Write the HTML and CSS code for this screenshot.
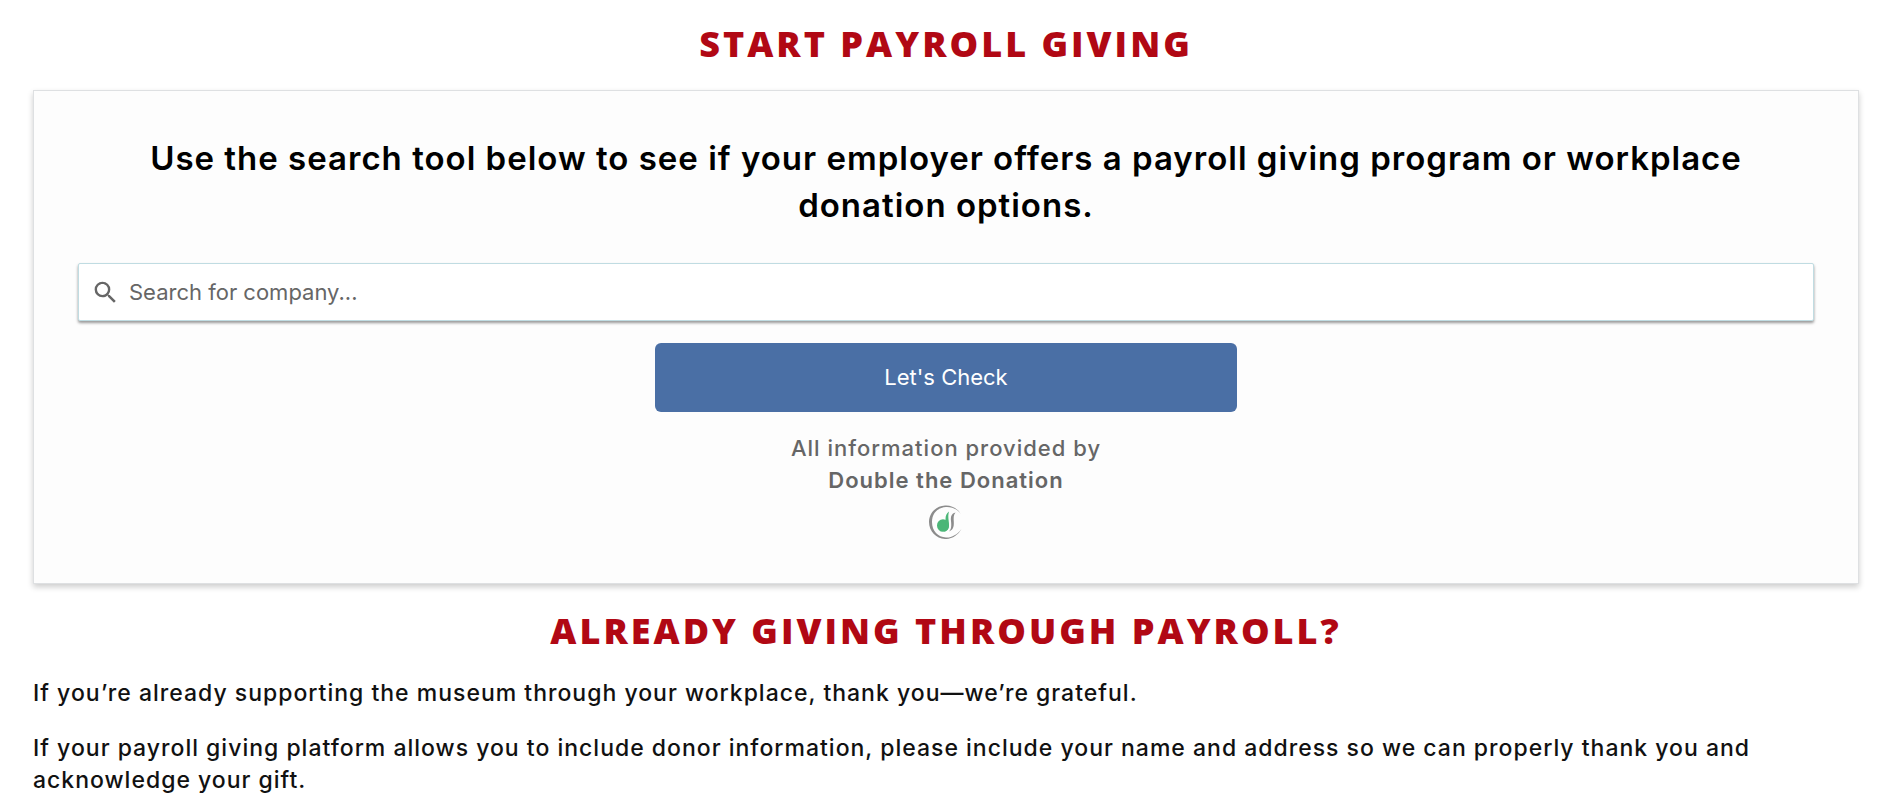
FILE: index.html
```html
<!DOCTYPE html>
<html lang="en">
<head>
<meta charset="utf-8">
<meta name="viewport" content="width=device-width, initial-scale=1">
<title>Start Payroll Giving</title>
<link rel="stylesheet" href="styles.css">
</head>
<body>
<main class="page">
  <h2 class="title">START PAYROLL GIVING</h2>
  <section class="card">
    <h3 class="card-heading">Use the search tool below to see if your employer offers a payroll giving program or workplace donation options.</h3>
    <form class="search-form">
      <div class="search">
        <label class="search-label" for="company">
          <svg class="search-icon" viewBox="0 0 24 24" role="img" aria-label="Company"><path fill="currentColor" d="M15.5 14h-.79l-.28-.27A6.471 6.471 0 0 0 16 9.500 6.500 6.500 0 1 0 9.500 16c1.610 0 3.090-.59 4.230-1.570l.27.28v.79l5 4.990L20.490 19l-4.990-5zm-6 0C7.010 14 5 11.990 5 9.500S7.010 5 9.500 5 14 7.010 14 9.500 11.990 14 9.500 14z"/></svg>
        </label>
        <input class="search-input" id="company" type="text" placeholder="Search for company...">
      </div>
      <button class="check-button" type="button">Let's Check</button>
    </form>
    <div class="credit">
      <span>All information provided by</span>
      <a class="credit-link" href="#">Double the Donation</a>
      <svg class="credit-logo" viewBox="0 0 34 34" role="img" aria-label="Double the Donation logo">
        <path fill="#8c8c8c" d="M32 9C28 3 22 0 16 .5 7 1 0 8 0 17s7 16.500 16 17c7 .3 13-4 16.500-10C28 30 22 33 17 32.500 9 32 3 26 3 17S9 2.500 17 2c6-.3 11 2 15 7z"/>
        <ellipse cx="14" cy="20.500" rx="6" ry="6.300" fill="#4bb677"/>
        <path fill="#4bb677" d="M20 6.500c-2.500 2-3.500 4-3.500 8V22c0 2-.5 3.500-1.500 4.500 3.500-.5 5-3 5-6.500 0-5-1.500-8 0-13.500z"/>
        <path fill="#8c8c8c" d="M26.500 7.500c-4 1-5 4-4.500 8.500.5 5 .5 8-2 10.500 4-1.500 5-4.500 4.800-9.500-.2-4-.5-7 1.700-9.500z"/>
      </svg>
    </div>
  </section>
  <h2 class="title">ALREADY GIVING THROUGH PAYROLL?</h2>
  <p class="text">If you’re already supporting the museum through your workplace, thank you—we’re grateful.</p>
  <p class="text">If your payroll giving platform allows you to include donor information, please include your name and address so we can properly thank you and acknowledge your gift.</p>
</main>
</body>
</html>
```
FILE: styles.css
```css
* { box-sizing: border-box; }

body {
  margin: 0;
  background: #fff;
  color: #111;
  font-family: Inter, "Liberation Sans", sans-serif;
}

.page { padding: 20px 33px 0; }

.title {
  margin: 0;
  color: #b10814;
  font-family: "Open Sans", "Noto Sans", sans-serif;
  font-size: 36px;
  font-weight: 800;
  line-height: 48px;
  letter-spacing: 3px;
  text-align: center;
}

.card {
  margin: 22px 0 23px;
  padding: 44px;
  background: #fdfdfd;
  border: 1px solid #dee0e2;
  box-shadow: 0 3px 6px rgba(0, 0, 0, 0.2);
  text-align: center;
}

.card-heading {
  margin: 0 0 34px;
  padding: 0 32px;
  color: #000;
  font-size: 33px;
  font-weight: 600;
  line-height: 47px;
  letter-spacing: 1px;
}

.search-form {
  display: flex;
  flex-direction: column;
  align-items: center;
  gap: 22px;
}

.search {
  display: flex;
  align-items: center;
  gap: 9px;
  width: 100%;
  padding: 0 12px;
  background: #fff;
  border: 1px solid #c0dce2;
  border-radius: 2px;
  box-shadow: 0 2px 3px rgba(0, 0, 0, 0.4);
}

.search-label {
  display: flex;
  flex: none;
  color: #666;
}

.search-icon {
  width: 29px;
  height: 29px;
}

.search-input {
  flex: 1;
  min-width: 0;
  height: 56px;
  padding: 0;
  border: 0;
  outline: 0;
  background: transparent;
  color: #333;
  font: 400 22px/32px Inter, sans-serif;
}

.search-input::placeholder { color: #666; opacity: 1; }

.check-button {
  width: 33.5%;
  padding: 18px;
  border: 0;
  border-radius: 6px;
  background: #4a6fa5;
  color: #fff;
  font: 400 22px/33px Inter, sans-serif;
  cursor: pointer;
}

.credit {
  display: flex;
  flex-direction: column;
  align-items: center;
  margin-top: 20px;
  color: #666;
  font-size: 22px;
  font-weight: 500;
  line-height: 32px;
  letter-spacing: 1px;
}

.credit-link {
  color: inherit;
  font-weight: 600;
  text-decoration: none;
}

.credit-logo {
  width: 34px;
  height: 34px;
  margin-top: 9px;
}

.text {
  margin: 22px 0 23px;
  font-size: 23px;
  font-weight: 500;
  line-height: 32px;
  letter-spacing: 1px;
}
```
